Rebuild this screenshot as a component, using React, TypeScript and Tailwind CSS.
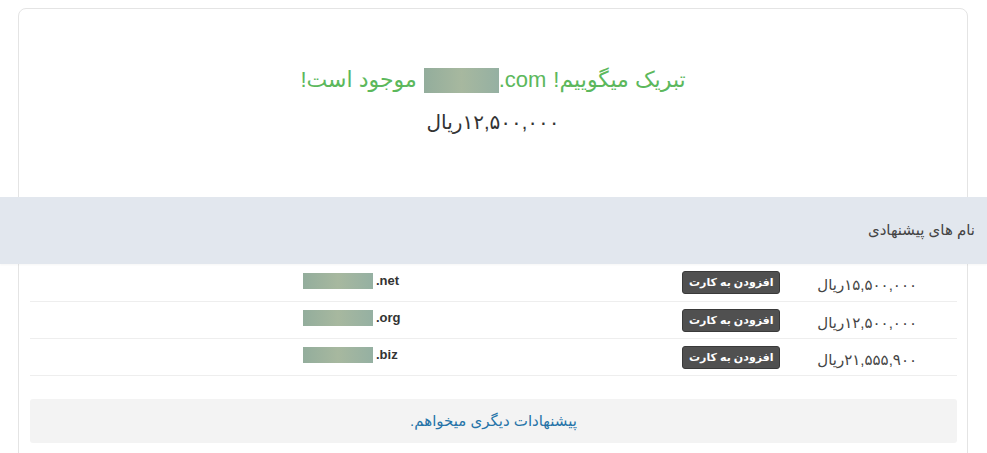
import React from 'react'

const fa = { fontFamily: "'Liberation Sans', 'DejaVu Sans', sans-serif" }

const rows = [
  { tld: '.net', price: '۱۵,۵۰۰,۰۰۰' },
  { tld: '.org', price: '۱۲,۵۰۰,۰۰۰' },
  { tld: '.biz', price: '۲۱,۵۵۵,۹۰۰' },
]

function Blur({ className }: { className: string }) {
  return <span className={`inline-block bg-gradient-to-r from-[#93ad9c] via-[#a7b89f] to-[#95b0a2] ${className}`} />
}

export default function App() {
  return (
    <div className="min-h-screen bg-white pl-[18px] pr-[19px] pt-[8px] text-[#333]" style={fa}>
      <div className="bg-white border border-[#e4e4e4] rounded-lg pb-10">
        <div className="h-[188px] flex flex-col items-center pt-[56px]" dir="rtl">
          <h1 className="text-[22px] text-[#5cb85c] leading-[30px] flex items-center gap-[7px]">
            <span>تبریک میگوییم!</span>
            <span dir="ltr" className="flex items-center">
              <Blur className="w-[75px] h-[25px]" />
              <span>.com</span>
            </span>
            <span>موجود است!</span>
          </h1>
          <div className="mt-[13px] text-[20px] text-[#333] leading-[28px]">۱۲,۵۰۰,۰۰۰ریال</div>
        </div>

        <div className="-ml-[19px] -mr-[20px] h-[67px] bg-[#e2e7ee] flex items-center pr-[12px] shadow-[0_1px_2px_rgba(0,0,0,0.04)]" dir="rtl">
          <span className="text-[15px] text-[#444]">نام های پیشنهادی</span>
        </div>

        <div className="ml-[11px] mr-[10px]">
          {rows.map((r, i) => (
            <div key={r.tld} className={`flex items-center ${i === 0 ? 'h-[38px]' : 'h-[37px]'} border-b border-[#eeeeee]`}>
              <div className="w-[273px]" />
              <div className="flex items-center -mt-[4px]" dir="ltr">
                <Blur className="w-[70px] h-[16px]" />
                <span className="text-[13px] font-bold text-[#333] ml-[3px]" style={{ fontFamily: "'Liberation Sans', Arial, sans-serif" }}>{r.tld}</span>
              </div>
              <div className="flex-1" />
              <div className="flex items-center gap-[37px] pr-[40px]" dir="rtl">
                <span className="text-[15px] text-[#444] mt-[6px]">{r.price}ریال</span>
                <button className="w-[98px] h-[23px] rounded-[3px] bg-[#505050] border border-[#3a3a3a] text-white text-[11px] font-bold leading-none">
                  افزودن به کارت
                </button>
              </div>
            </div>
          ))}

          <div className="mt-[23px] h-[44px] bg-[#f3f3f3] rounded-[3px] flex items-center justify-center" dir="rtl">
            <a className="text-[15px] text-[#2673a8]">پیشنهادات دیگری میخواهم.</a>
          </div>
        </div>
      </div>
    </div>
  )
}
